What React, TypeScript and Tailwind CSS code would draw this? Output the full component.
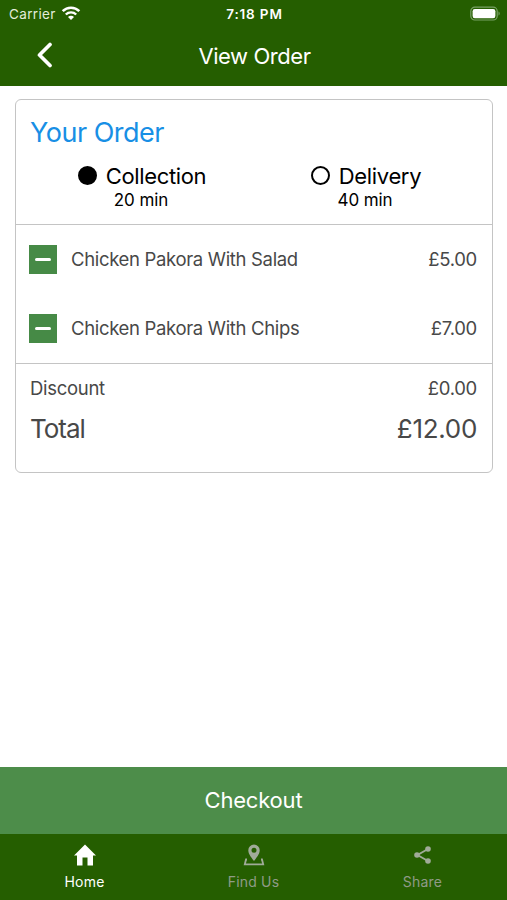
import React from 'react';
import clsx from 'clsx';

const orderItems = [
  { name: 'Chicken Pakora With Salad', price: '£5.00' },
  { name: 'Chicken Pakora With Chips', price: '£7.00' },
];

function StatusBar() {
  return (
    <div className="grid h-7 grid-cols-3 items-center pl-[9px] pr-[7px] text-[13.5px]">
      <div className="flex items-center gap-[5px]">
        <span className="tracking-[0.35px] text-[#e3eddb]">Carrier</span>
        <svg className="-mt-0.5" width="20" height="16" viewBox="0 0 20 16" fill="none">
          <path d="M1.700 6.200a11.700 11.700 0 0 1 16.600 0" stroke="white" strokeWidth="2.600" />
          <path d="M4.800 9.500a7.400 7.400 0 0 1 10.400 0" stroke="white" strokeWidth="2.400" />
          <path d="M7 12a4.200 4.200 0 0 1 6 0L10 15z" fill="white" />
        </svg>
      </div>
      <span className="text-center font-semibold tracking-[0.85px]">7:18 PM</span>
      <svg className="-mt-px justify-self-end" width="30" height="16" viewBox="0 0 30 16" fill="none">
        <rect x="0.8" y="1.2" width="26.4" height="12.8" rx="4" stroke="#79a165" strokeWidth="1.2" />
        <rect x="2.6" y="3" width="22.8" height="9.2" rx="2.2" fill="white" />
        <path d="M28.5 5.6c1.6.8 1.6 3.2 0 4z" fill="#79a165" />
      </svg>
    </div>
  );
}

function Choice({ label, time, selected }: { label: string; time: string; selected?: boolean }) {
  return (
    <div className="flex flex-col items-center text-black">
      <div className="flex items-center gap-[9px]">
        <span
          className={clsx(
            '-mt-0.5 h-[19px] w-[19px] rounded-full border-2 border-black',
            selected && 'bg-black'
          )}
        />
        <span className="text-[22px] leading-[28px] tracking-[-0.35px]">{label}</span>
      </div>
      <span className="mr-[2px] text-[17px] leading-[20px] tracking-[-0.1px]">{time}</span>
    </div>
  );
}

function Tab({ label, active, children }: { label: string; active?: boolean; children: React.ReactNode }) {
  return (
    <div
      className={clsx(
        'flex flex-1 flex-col items-center pt-[9px] text-[14px]',
        active ? 'text-white' : 'text-[#a0ab98]'
      )}
    >
      {children}
      <span className={clsx('mt-[5px] leading-[20px] tracking-[0.2px]', !active && 'text-[#8f9b87]')}>
        {label}
      </span>
    </div>
  );
}

export default function App() {
  return (
    <div className="flex h-[900px] w-[507px] flex-col bg-white font-['Inter',sans-serif]">
      <header className="h-[86px] bg-[#255e00] text-white">
        <StatusBar />
        <div className="grid h-[56px] grid-cols-[80px_1fr_80px] items-center">
          <svg className="-mt-[3px] ml-[36px]" width="17" height="26" viewBox="0 0 17 26" fill="none">
            <path
              d="M14 2.500 3.500 13 14 23.500"
              stroke="white"
              strokeWidth="3.700"
              strokeLinecap="round"
              strokeLinejoin="round"
            />
          </svg>
          <h1 className="pl-[2px] text-center text-[22px] tracking-[-0.45px]">View Order</h1>
        </div>
      </header>

      <main className="flex-1 pl-[15px] pr-[14px] pt-[13px]">
        <section className="h-[374px] rounded-[6px] border border-[#c4c4c4] text-[#484848]">
          <div className="h-[125px] border-b border-[#c4c4c4] pt-[15px]">
            <h2 className="ml-[14px] text-[27px] leading-[36px] tracking-[-0.5px] text-[#188fe5]">
              Your Order
            </h2>
            <div className="mt-[11px] grid grid-cols-2 px-[14px]">
              <Choice label="Collection" time="20 min" selected />
              <Choice label="Delivery" time="40 min" />
            </div>
          </div>

          <ul className="h-[139px] border-b border-[#c4c4c4]">
            {orderItems.map((item) => (
              <li
                key={item.name}
                className="flex h-[69px] items-center pl-[13px] pr-[15px] text-[18.5px]"
              >
                <button className="flex h-[29px] w-[28px] justify-center bg-[#468a46] pt-[13px]">
                  <span className="h-[2.500px] w-4 rounded-full bg-white" />
                </button>
                <span className="ml-[14px] flex-1 tracking-[-0.33px]">{item.name}</span>
                <span className="tracking-[-0.3px]">{item.price}</span>
              </li>
            ))}
          </ul>

          <div className="pl-[14px] pr-[15px] pt-[11px]">
            <div className="flex justify-between text-[18.5px] leading-[26px] tracking-[-0.3px]">
              <span>Discount</span>
              <span>£0.00</span>
            </div>
            <div className="mt-[10px] flex justify-between text-[26px] leading-[36px]">
              <span className="tracking-[-1px]">Total</span>
              <span className="tracking-[-0.3px]">£12.00</span>
            </div>
          </div>
        </section>
      </main>

      <button className="h-[67px] bg-[#4d8d4a] text-[22px] tracking-[-0.2px] text-white">Checkout</button>

      <nav className="flex h-[66px] bg-[#255e00]">
        <Tab label="Home" active>
          <svg width="24" height="24" viewBox="0 0 24 24" fill="currentColor">
            <path d="M9.500 22.500v-8h5v8H20V12.500h3L12 1.500 1 12.500h3v10z" />
          </svg>
        </Tab>
        <Tab label="Find Us">
          <svg width="24" height="24" viewBox="0 0 24 24" fill="none">
            <path
              d="M12 18C8 13 6.300 10.300 6.300 7.300a5.700 5.700 0 0 1 11.400 0C17.700 10.300 16 13 12 18zM12 4.800a2.500 2.500 0 1 0 0 5 2.500 2.500 0 0 0 0-5z"
              fill="currentColor"
              fillRule="evenodd"
            />
            <path d="M5 16.500H4L2.800 21.300h18.400L20 16.500h-1" stroke="currentColor" strokeWidth="1.800" />
          </svg>
        </Tab>
        <Tab label="Share">
          <svg width="24" height="24" viewBox="0 0 24 24" fill="currentColor">
            <path d="M17 6 6.500 12 17 18" fill="none" stroke="currentColor" strokeWidth="1.900" />
            <circle cx="17" cy="6" r="2.800" />
            <circle cx="6" cy="12" r="2.800" />
            <circle cx="17" cy="18" r="2.800" />
          </svg>
        </Tab>
      </nav>
    </div>
  );
}
